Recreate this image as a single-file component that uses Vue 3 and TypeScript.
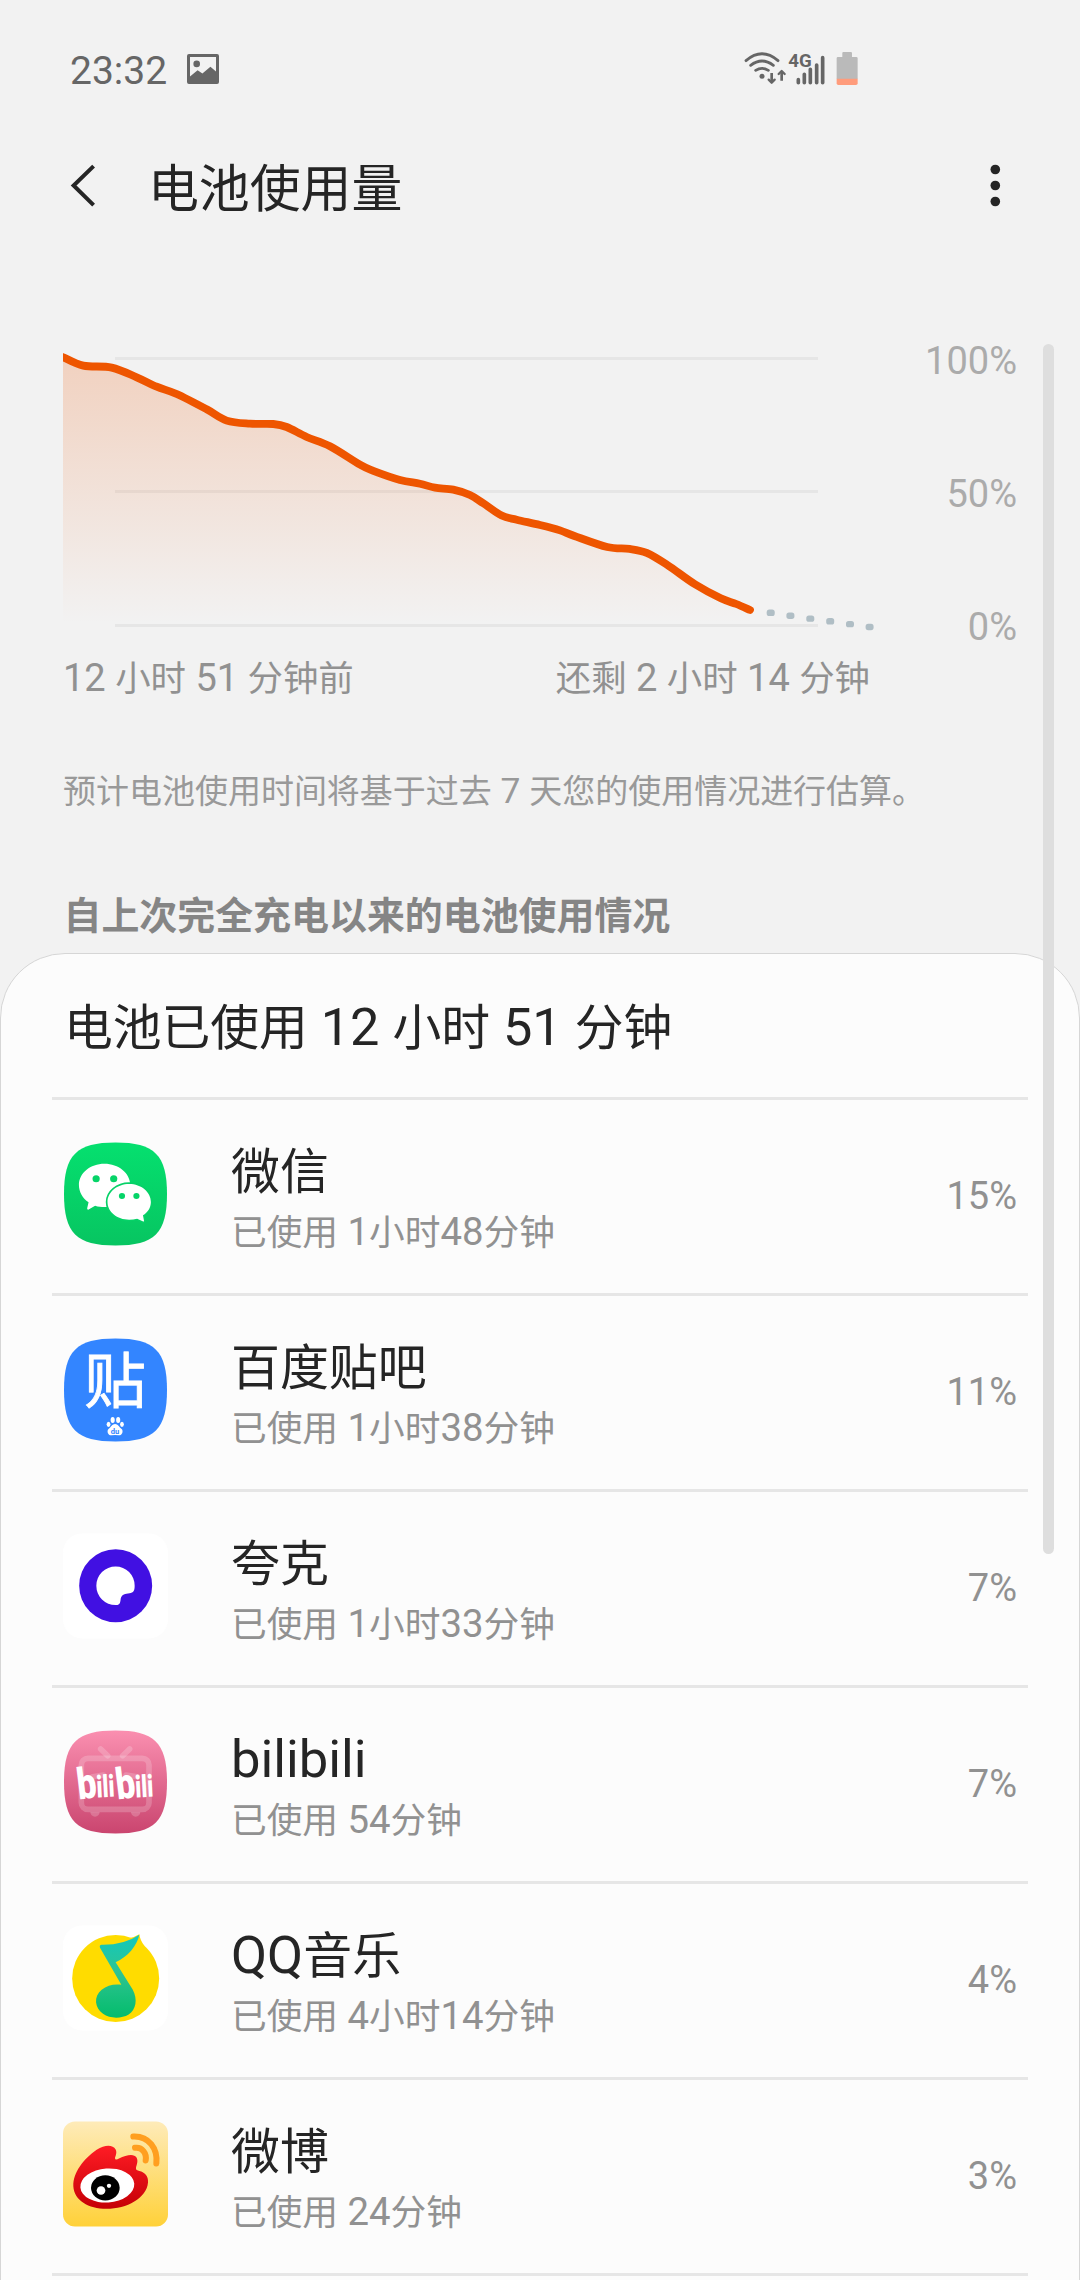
<script setup lang="ts">
import { computed, h } from 'vue'

type IconName = 'wechat' | 'tieba' | 'quark' | 'bilibili' | 'qqmusic' | 'weibo'

interface AppUsage {
  icon: IconName
  name: string
  used: string
  percent: number
}

type Point = [number, number]

const apps: AppUsage[] = [
  { icon: 'wechat', name: '微信', used: '已使用 1小时48分钟', percent: 15 },
  { icon: 'tieba', name: '百度贴吧', used: '已使用 1小时38分钟', percent: 11 },
  { icon: 'quark', name: '夸克', used: '已使用 1小时33分钟', percent: 7 },
  { icon: 'bilibili', name: 'bilibili', used: '已使用 54分钟', percent: 7 },
  { icon: 'qqmusic', name: 'QQ音乐', used: '已使用 4小时14分钟', percent: 4 },
  { icon: 'weibo', name: '微博', used: '已使用 24分钟', percent: 3 },
]

const levels: Point[] = [
  [56, 353.6], [63.3, 357.3], [83.3, 365.6], [111.7, 367.6], [136.7, 377.3], [156.7, 386.7], [176.7, 394],
  [206.7, 409.3], [226.7, 420.6], [250, 423.7], [273.3, 424], [286.7, 427], [306.7, 437],
  [330, 446.3], [360, 464.7], [373.3, 470.9], [400, 480], [420, 483.7], [435, 487.7],
  [453.3, 489.6], [470, 495], [483.3, 503.3], [501.7, 515.6], [516.7, 519.7], [540, 525],
  [560, 530.4], [574.4, 536], [607.2, 547], [629.5, 548.9], [646.7, 552.9], [667.4, 565],
  [695, 584.3], [720.8, 598.3], [736.3, 604], [750, 610],
]

const forecast: Point[] = [
  [770.7, 612.8], [790.4, 615.7], [810.3, 618.6], [830.2, 621.3], [850, 624.1], [869.6, 627],
]

// Catmull-Rom spline through the samples, written as cubic segments
const linePath = computed<string>(() => {
  const p = levels
  let d = `M${p[0][0]} ${p[0][1]}`
  for (let i = 0; i < p.length - 1; i++) {
    const a = p[Math.max(i - 1, 0)]
    const b = p[i]
    const c = p[i + 1]
    const e = p[Math.min(i + 2, p.length - 1)]
    d += ` C${b[0] + (c[0] - a[0]) / 6} ${b[1] + (c[1] - a[1]) / 6}`
    d += ` ${c[0] - (e[0] - b[0]) / 6} ${c[1] - (e[1] - b[1]) / 6} ${c[0]} ${c[1]}`
  }
  return d
})
const areaPath = computed<string>(() => `${linePath.value} L750 624 L56 624 Z`)

// Chinese runs are set slightly smaller than the Latin digits beside them
const Mixed = (props: { text: string }) =>
  h(
    'span',
    { class: 'mixed' },
    (props.text.match(/[\u3000-\u9fff]+|[^\u3000-\u9fff]+/g) ?? []).map((run) =>
      /[\u3000-\u9fff]/.test(run) ? h('span', { class: 'han' }, run) : run,
    ),
  )
Mixed.props = ['text']

const squircle = 'M53 1.5C92 1.5 104.5 14 104.5 53S92 104.5 53 104.5 1.5 92 1.5 53 14 1.5 53 1.5Z'
</script>

<template>
  <div class="screen">
    <div class="status">
      <span class="clock">23:32</span>
      <svg class="photo" viewBox="0 0 32 30">
        <path
          fill="#666"
          fill-rule="evenodd"
          d="M2 0H30a2 2 0 0 1 2 2V28a2 2 0 0 1-2 2H2a2 2 0 0 1-2-2V2A2 2 0 0 1 2 0ZM3 3V22.5L10.6 16.3 15.4 19.6 23.4 12.8 29 17.6V3ZM9.7 6.6a3.3 3.3 0 1 1 0 6.6 3.3 3.3 0 0 1 0-6.6Z"
        />
      </svg>
      <svg class="signals" viewBox="70 60 350 110">
        <g fill="none" stroke="#666" stroke-width="8.5" stroke-linecap="round">
          <path d="M79 92Q127 51 175 92M93 106Q127 80 161 106M108 121Q127 109 146 121" />
          <path stroke-width="8" stroke-linecap="butt" d="M156 129V156M186 152V126" />
          <path stroke-width="7" stroke-linejoin="round" d="M147 149L156 158 165 149M177 132L186 123 195 132" />
        </g>
        <circle cx="127" cy="139" r="7.5" fill="#666" />
        <g stroke="#666" stroke-width="11" stroke-linecap="round">
          <path d="M236 149V158M254 133V158M272 118V158M291 105V158M309 83V158" />
        </g>
        <text x="206" y="112" class="net">4G</text>
        <path fill="#bababa" d="M368 81V69q0-3 3-3H394q3 0 3 3V81H410q4 0 4 4V147H351V85q0-4 4-4Z" />
        <path fill="#ff9c7c" d="M351 146H414V160q0 5-5 5H356q-5 0-5-5Z" />
      </svg>
    </div>

    <header class="bar">
      <svg class="back" viewBox="0 0 28 44">
        <path d="M25.6 2.1L5.6 21.5 25.6 41.1" fill="none" stroke="#252525" stroke-width="4" />
      </svg>
      <h1><Mixed text="电池使用量" /></h1>
      <svg class="more" viewBox="0 0 12 44">
        <g fill="#252525">
          <circle cx="6.3" cy="5.5" r="4.8" />
          <circle cx="6.3" cy="21.5" r="4.8" />
          <circle cx="6.3" cy="37.5" r="4.8" />
        </g>
      </svg>
    </header>

    <section class="chart">
      <svg class="plot" viewBox="63 342 817 304">
        <defs>
          <linearGradient id="fade" gradientUnits="userSpaceOnUse" x1="0" y1="357" x2="0" y2="624">
            <stop offset="0" stop-color="#ee5500" stop-opacity=".21" />
            <stop offset="1" stop-color="#ee5500" stop-opacity="0" />
          </linearGradient>
        </defs>
        <path d="M115 358.5H818M115 491.5H818M115 625.5H818" stroke="#e6e6e6" stroke-width="3" />
        <path :d="areaPath" fill="url(#fade)" />
        <path :d="linePath" fill="none" stroke="#ee5500" stroke-width="7.8" stroke-linecap="round" />
        <rect
          v-for="dot in forecast"
          :key="dot[0]"
          :x="dot[0] - 4"
          :y="dot[1] - 3.2"
          width="8"
          height="6.4"
          rx="2.6"
          fill="#b0bec5"
        />
      </svg>
      <div class="scale">
        <span>100%</span>
        <span>50%</span>
        <span>0%</span>
      </div>
    </section>

    <div class="range">
      <Mixed text="12 小时 51 分钟前" />
      <Mixed text="还剩 2 小时 14 分钟" />
    </div>
    <p class="note"><Mixed text="预计电池使用时间将基于过去 7 天您的使用情况进行估算。" /></p>
    <h2><Mixed text="自上次完全充电以来的电池使用情况" /></h2>

    <main class="card">
      <h3><Mixed text="电池已使用 12 小时 51 分钟" /></h3>
      <ul>
        <li v-for="app in apps" :key="app.icon">
          <svg v-if="app.icon === 'wechat'" class="icon" viewBox="0 0 106 106">
            <defs>
              <linearGradient id="wx" x1="0" y1="0" x2="0" y2="1">
                <stop offset="0" stop-color="#05e06f" />
                <stop offset="1" stop-color="#07c561" />
              </linearGradient>
            </defs>
            <path :d="squircle" fill="url(#wx)" />
            <g transform="translate(-22.5 -21.3) scale(.3444 .3333)">
              <path
                fill="#fff"
                d="M187 132C228 132 262 160 262 196 262 235 228 262 187 262 178 262 169 261 160 258L140 270Q136 270 137 266L141 248C124 236 113 217 113 196 113 160 146 132 187 132Z"
              />
              <path
                fill="#fff"
                stroke="#06d167"
                stroke-width="10"
                paint-order="stroke"
                d="M259 193C294 193 322 217 322 247 322 264 313 278 299 287L302 303Q302 307 298 305L282 297C275 299 267 300 259 300 224 300 196 277 196 247 196 217 224 193 259 193Z"
              />
              <g fill="#06d468">
                <circle cx="163" cy="177" r="10.5" />
                <circle cx="214" cy="177" r="10.5" />
                <circle cx="238" cy="229" r="9" />
                <circle cx="280" cy="229" r="9" />
              </g>
            </g>
          </svg>

          <svg v-else-if="app.icon === 'tieba'" class="icon" viewBox="0 0 106 106">
            <path :d="squircle" fill="#3385ff" />
            <text x="21.5" y="66.2" class="tie" textLength="62" lengthAdjust="spacingAndGlyphs">贴</text>
            <g transform="translate(-22.5 -217.3) scale(.3444 .3333)" fill="#fff">
              <ellipse cx="199" cy="914" rx="5.5" ry="8" />
              <ellipse cx="211" cy="901" rx="6" ry="9" />
              <ellipse cx="227" cy="901" rx="6" ry="9" />
              <ellipse cx="238" cy="914" rx="5.5" ry="8" />
              <path d="M218 913C226 913 230 922 237 928 243 934 239 948 228 947L218 946 208 947C197 948 193 934 199 928 206 922 210 913 218 913Z" />
              <text x="217.5" y="942" class="du">du</text>
            </g>
          </svg>

          <svg v-else-if="app.icon === 'quark'" class="icon" viewBox="0 0 106 106">
            <rect x=".5" y=".5" width="105" height="105" rx="19" fill="#fff" />
            <g transform="translate(-12.5 -13.9) scale(.33333)">
              <circle cx="197" cy="200" r="109.5" fill="#4110e2" />
              <path
                fill="#fff"
                d="M197 142A58 58 0 1 0 197 258C210 259 211 250 212 240 214 228 221 224 234 223 247 222 254 220 254 200A57 58 0 0 0 197 142Z"
              />
            </g>
          </svg>

          <svg v-else-if="app.icon === 'bilibili'" class="icon" viewBox="0 0 106 106">
            <defs>
              <linearGradient id="bl" x1="0" y1="0" x2="0" y2="1">
                <stop offset="0" stop-color="#fa8fb0" />
                <stop offset="1" stop-color="#ca456f" />
              </linearGradient>
            </defs>
            <path :d="squircle" fill="url(#bl)" />
            <g transform="translate(-12.5 -14.3) scale(.33333)">
              <g fill="none" stroke="#fff" stroke-opacity=".2" stroke-width="17" stroke-linecap="round">
                <rect x="94" y="131" width="203" height="153" rx="20" />
                <path d="M152 103L173 123M239 103L218 123M128 186L160 181M228 181L262 186" />
              </g>
              <path d="M121 292H149A14 14 0 0 1 121 292ZM243 292H271A14 14 0 0 1 243 292Z" fill="#fff" fill-opacity=".2" />
              <g class="bili">
                <text class="b" x="86" y="251" textLength="58" lengthAdjust="spacingAndGlyphs" transform="rotate(-7 112 251)">b</text>
                <text class="ili" x="141" y="247" textLength="54" lengthAdjust="spacingAndGlyphs" transform="rotate(-3 166 246)">ili</text>
                <text class="b" x="202" y="251" textLength="58" lengthAdjust="spacingAndGlyphs" transform="rotate(-7 228 251)">b</text>
                <text class="ili" x="257" y="247" textLength="54" lengthAdjust="spacingAndGlyphs" transform="rotate(-3 282 246)">ili</text>
              </g>
            </g>
          </svg>

          <svg v-else-if="app.icon === 'qqmusic'" class="icon" viewBox="0 0 106 106">
            <defs>
              <linearGradient id="qq" x1="0" y1="0" x2="0" y2="1">
                <stop offset="0" stop-color="#12c8be" />
                <stop offset=".45" stop-color="#2ec492" />
                <stop offset="1" stop-color="#04bc6c" />
              </linearGradient>
            </defs>
            <rect x=".5" y=".5" width="105" height="105" rx="19" fill="#fff" />
            <g transform="translate(-12.5 -15.5) scale(.33333)">
              <circle cx="197" cy="207" r="130.5" fill="#ffdc00" />
              <path d="M236 86Q256 82 268 74 270 92 284 110L262 120Z" fill="#ffdc00" />
              <path
                fill="url(#qq)"
                d="M155 106Q222 107 268 76C262 108 232 144 197 158L248 240C264 270 258 300 236 315 214 328 180 328 159 313 134 295 130 262 155 241 171 228 192 223 214 226L150 115Q147 107 155 106Z"
              />
            </g>
          </svg>

          <svg v-else class="icon" viewBox="0 0 106 106">
            <defs>
              <linearGradient id="wbg" x1="0" y1="0" x2="0" y2="1">
                <stop offset="0" stop-color="#feebb9" />
                <stop offset="1" stop-color="#ffd139" />
              </linearGradient>
              <linearGradient id="wbr" x1="0" y1="0" x2="0" y2="1">
                <stop offset="0" stop-color="#ff1c25" />
                <stop offset="1" stop-color="#c50006" />
              </linearGradient>
            </defs>
            <rect x=".5" y=".5" width="105" height="105" rx="12" fill="url(#wbg)" />
            <g transform="translate(-12.5 -16.5) scale(.33333)">
              <path
                fill="url(#wbr)"
                d="M70 245C68 205 102 162 140 136 165 120 188 120 197 135 202 145 196 155 195 161 196 167 201 165 207 162 230 151 252 146 260 160 266 172 258 184 258 192 258 198 264 198 271 200 284 204 296 214 294 234 290 281 230 313 170 313 115 313 72 287 70 245Z"
              />
              <ellipse cx="172" cy="243" rx="81" ry="51" fill="#fff" transform="rotate(-4 172 243)" />
              <ellipse cx="166" cy="250" rx="43" ry="38" fill="#000" />
              <circle cx="153" cy="258" r="13" fill="#fff" />
              <circle cx="177" cy="244" r="6.5" fill="#fff" />
              <g fill="none" stroke="#ff9f20" stroke-width="18" stroke-linecap="round">
                <path d="M250 96C296 94 324 132 319 177" />
                <path d="M255 130C276 127 291 146 287 168" />
              </g>
            </g>
          </svg>

          <div class="info">
            <div class="name"><Mixed :text="app.name" /></div>
            <div class="used"><Mixed :text="app.used" /></div>
          </div>
          <span class="percent">{{ app.percent }}%</span>
        </li>
      </ul>
    </main>
    <div class="scrollbar"></div>
  </div>
</template>

<style>
body {
  margin: 0;
  background: #f2f2f2;
}
.mixed {
  white-space: pre;
}
.mixed .han {
  font-size: 0.932em;
  line-height: 0;
}
</style>

<style scoped>
.screen {
  position: relative;
  width: 1080px;
  height: 2280px;
  overflow: hidden;
  box-sizing: border-box;
  background: #f2f2f2;
  color: #252525;
  font-family: Roboto, 'Noto Sans CJK SC', sans-serif;
  font-size: 38px;
  font-weight: 400;
}
svg {
  display: block;
  flex: none;
}
h1,
h2,
h3,
p,
ul {
  margin: 0;
  padding: 0;
  font-weight: 400;
}
.status {
  display: flex;
  align-items: flex-start;
  height: 116px;
  padding-left: 70px;
  box-sizing: border-box;
  color: #666;
}
.clock {
  flex: none;
  width: 117px;
  padding-top: 48px;
  font-size: 39px;
  line-height: 46px;
}
.photo {
  width: 32px;
  height: 30px;
  margin-top: 54px;
}
.signals {
  width: 116.67px;
  height: 36.67px;
  margin: 50px 0 0 524.3px;
}
.net {
  font-size: 56px;
  font-weight: 700;
  fill: #666;
}
.bar {
  display: flex;
  align-items: center;
  height: 140px;
  padding: 0 79px 0 68px;
}
.back {
  width: 28px;
  height: 44px;
}
h1 {
  flex: 1;
  margin: 4px 0 0 52px;
  font-size: 54.6px;
  line-height: 64px;
}
.more {
  width: 12px;
  height: 44px;
}
.chart {
  display: flex;
  justify-content: space-between;
  padding: 86px 63px 0 63px;
}
.plot {
  width: 817px;
  height: 304px;
}
.scale {
  display: flex;
  flex-direction: column;
  gap: 95px;
  color: #ababab;
  line-height: 38px;
  text-align: right;
}
.range {
  display: flex;
  justify-content: space-between;
  padding: 12px 210px 0 63px;
  color: #919191;
  line-height: 41px;
}
.note {
  padding: 70px 0 0 63px;
  color: #999;
  font-size: 35.4px;
  line-height: 44px;
}
h2 {
  padding: 78px 0 0 63.5px;
  color: #858585;
  font-size: 40.7px;
  font-weight: 700;
  line-height: 48px;
}
.card {
  height: 1400px;
  margin-top: 14px;
  border: 1px solid #d6d6d6;
  border-radius: 65px 65px 0 0;
  box-sizing: border-box;
  background: #fcfcfc;
}
h3 {
  height: 143px;
  padding-left: 63px;
  font-size: 52.3px;
  line-height: 146px;
}
ul {
  margin: 0 51px;
  list-style: none;
}
li {
  display: flex;
  align-items: flex-start;
  height: 196px;
  padding: 0 11px 0 10px;
  border-top: 3px solid #e6e6e6;
  box-sizing: border-box;
}
li:last-child {
  height: 199px;
  border-bottom: 3px solid #e6e6e6;
}
.icon {
  width: 106px;
  height: 106px;
  margin-top: 41px;
  overflow: visible;
  transform: translateX(0.5px);
}
.tie {
  font-family: 'Noto Sans CJK SC', sans-serif;
  font-size: 60px;
  font-weight: 400;
  fill: #fff;
  stroke: #fff;
  stroke-width: 0.8px;
}
.du {
  font-size: 22px;
  font-weight: 700;
  fill: #3385ff;
  text-anchor: middle;
}
.bili text {
  font-weight: 900;
  fill: #fff;
}
.bili .b {
  font-size: 130px;
}
.bili .ili {
  font-size: 92px;
}
.info {
  flex: 1;
  padding: 40px 0 0 63px;
}
.name {
  font-size: 52.5px;
  line-height: 62px;
}
.used {
  color: #919191;
  font-size: 38.3px;
  line-height: 60px;
}
.percent {
  color: #919191;
  line-height: 193px;
}
.scrollbar {
  position: absolute;
  top: 344px;
  left: 1043px;
  width: 11px;
  height: 1210px;
  border-radius: 6px;
  background: #dedede;
}
</style>
